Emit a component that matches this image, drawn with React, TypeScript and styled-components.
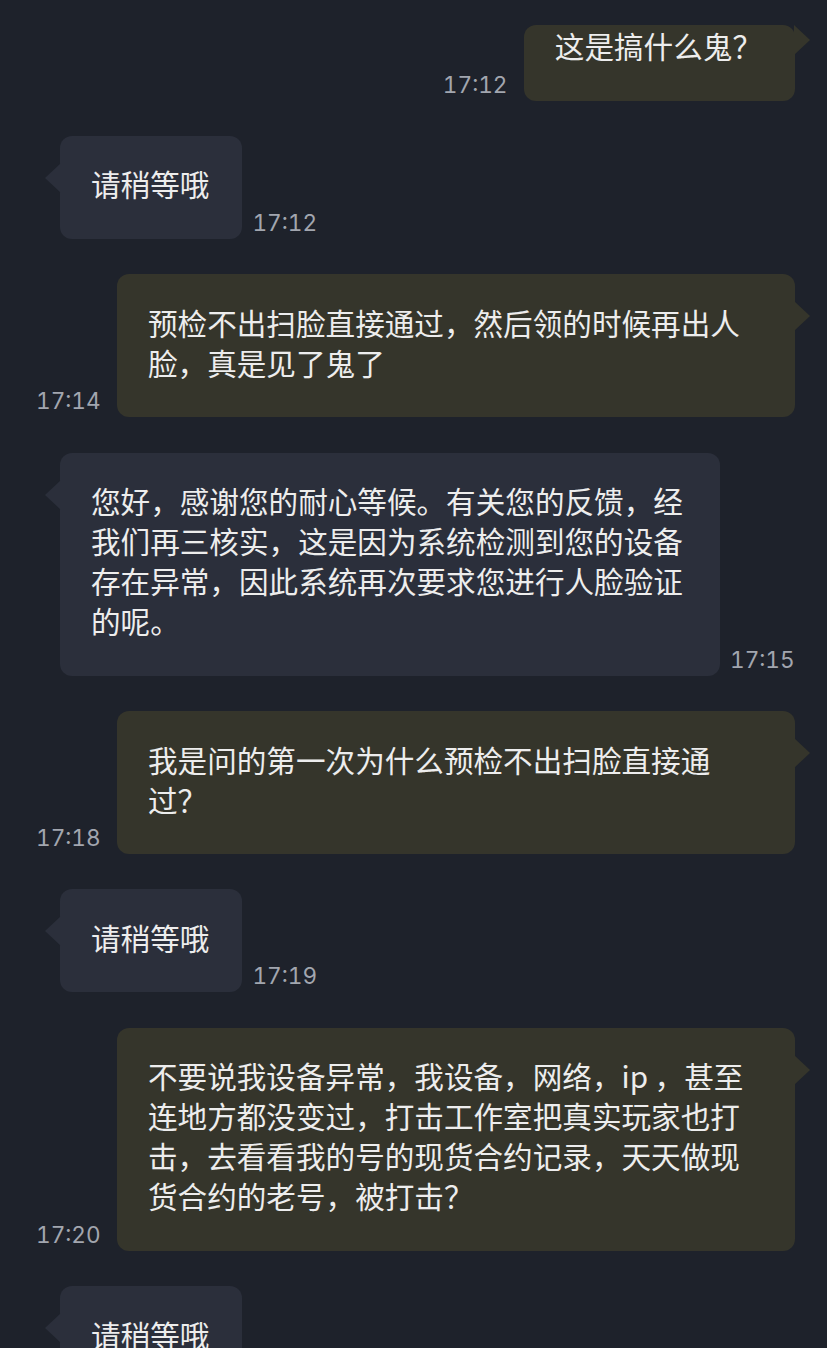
import React from "react";
import styled, { createGlobalStyle, css } from "styled-components";

const Global = createGlobalStyle`
  html, body {
    margin: 0;
    padding: 0;
    overflow: hidden;
    background: #1e222b;
  }
  * { box-sizing: border-box; }
`;

const Page = styled.div`
  width: 827px;
  min-height: 1348px;
  background: #1e222b;
  display: flex;
  flex-direction: column;
  gap: 35.4px;
  padding-top: 25px;
  font-family: "Noto Sans CJK SC", "Noto Sans", sans-serif;
`;

const Row = styled.div<{ $out: boolean }>`
  display: flex;
  align-items: flex-end;
  ${(p) =>
    p.$out
      ? css`
          flex-direction: row;
          justify-content: flex-end;
          gap: 18px;
          padding: 0 32px 0 36px;
        `
      : css`
          flex-direction: row-reverse;
          justify-content: flex-end;
          gap: 10px;
          padding: 0 34px 0 60px;
        `}
`;

const Bubble = styled.div<{ $out: boolean; $compact?: boolean }>`
  position: relative;
  flex: 0 1 auto;
  min-width: 0;
  max-width: ${(p) => (p.$out ? "678px" : "660px")};
  padding: ${(p) => (p.$compact ? "1px" : "28.5px")} 33px 34.5px 31px;
  border-radius: 12px;
  background: ${(p) => (p.$out ? "#35352b" : "#2b2f3b")};
  color: #ededed;
  font-size: 29.6px;
  line-height: 40px;
  word-break: normal;
  line-break: strict;

  &::after {
    content: "";
    position: absolute;
    top: ${(p) => (p.$compact ? "0px" : "27px")};
    width: 0;
    height: 0;
    border-top: 15px solid transparent;
    border-bottom: 15px solid transparent;
    ${(p) =>
      p.$out
        ? css`
            right: -15px;
            border-left: 16px solid #35352b;
          `
        : css`
            left: -15px;
            border-right: 16px solid #2b2f3b;
          `}
  }
`;

const Time = styled.span<{ $out: boolean }>`
  flex: 0 0 63px;
  width: 63px;
  text-align: ${(p) => (p.$out ? "right" : "left")};
  white-space: nowrap;
  font-family: "Inter", "Roboto", sans-serif;
  font-size: 22.6px;
  font-variant-numeric: tabular-nums;
  letter-spacing: 0;
  line-height: 26px;
  color: #a2a6af;
  margin-bottom: 3px;
`;

type Msg = { out: boolean; text: string; time?: string; compact?: boolean };

const messages: Msg[] = [
  { out: true, text: "这是搞什么鬼？", time: "17:12", compact: true },
  { out: false, text: "请稍等哦", time: "17:12" },
  {
    out: true,
    text: "预检不出扫脸直接通过，然后领的时候再出人脸，真是见了鬼了",
    time: "17:14",
  },
  {
    out: false,
    text: "您好，感谢您的耐心等候。有关您的反馈，经我们再三核实，这是因为系统检测到您的设备存在异常，因此系统再次要求您进行人脸验证的呢。",
    time: "17:15",
  },
  {
    out: true,
    text: "我是问的第一次为什么预检不出扫脸直接通过？",
    time: "17:18",
  },
  { out: false, text: "请稍等哦", time: "17:19" },
  {
    out: true,
    text: "不要说我设备异常，我设备，网络，ip ，甚至连地方都没变过，打击工作室把真实玩家也打击，去看看我的号的现货合约记录，天天做现货合约的老号，被打击？",
    time: "17:20",
  },
  { out: false, text: "请稍等哦" },
];

export default function App() {
  return (
    <>
      <Global />
      <Page>
        {messages.map((m, i) => (
          <Row key={i} $out={m.out}>
            {m.time ? <Time $out={m.out}>{m.time}</Time> : null}
            <Bubble $out={m.out} $compact={m.compact}>
              {m.text}
            </Bubble>
          </Row>
        ))}
      </Page>
    </>
  );
}
